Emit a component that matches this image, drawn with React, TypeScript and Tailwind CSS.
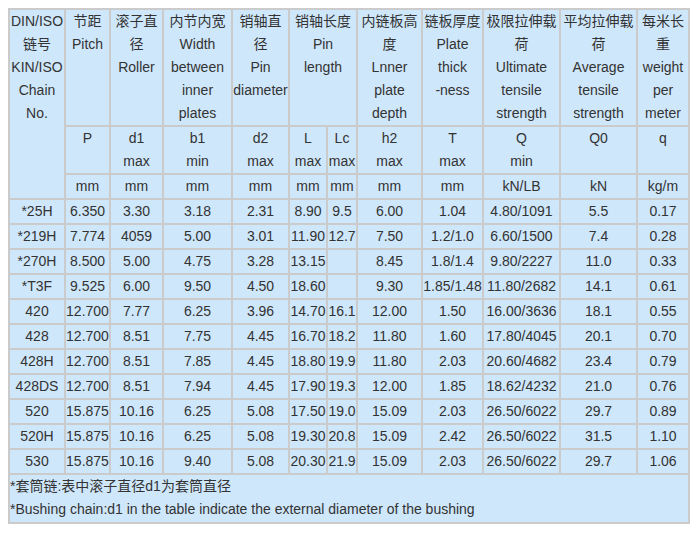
const COLS = [56, 45, 53, 69, 57, 38, 30, 65, 61, 77, 77, 52];

const ROWS = [
  ["*25H", "6.350", "3.30", "3.18", "2.31", "8.90", "9.5", "6.00", "1.04", "4.80/1091", "5.5", "0.17"],
  ["*219H", "7.774", "4059", "5.00", "3.01", "11.90", "12.7", "7.50", "1.2/1.0", "6.60/1500", "7.4", "0.28"],
  ["*270H", "8.500", "5.00", "4.75", "3.28", "13.15", "", "8.45", "1.8/1.4", "9.80/2227", "11.0", "0.33"],
  ["*T3F", "9.525", "6.00", "9.50", "4.50", "18.60", "", "9.30", "1.85/1.48", "11.80/2682", "14.1", "0.61"],
  ["420", "12.700", "7.77", "6.25", "3.96", "14.70", "16.1", "12.00", "1.50", "16.00/3636", "18.1", "0.55"],
  ["428", "12.700", "8.51", "7.75", "4.45", "16.70", "18.2", "11.80", "1.60", "17.80/4045", "20.1", "0.70"],
  ["428H", "12.700", "8.51", "7.85", "4.45", "18.80", "19.9", "11.80", "2.03", "20.60/4682", "23.4", "0.79"],
  ["428DS", "12.700", "8.51", "7.94", "4.45", "17.90", "19.3", "12.00", "1.85", "18.62/4232", "21.0", "0.76"],
  ["520", "15.875", "10.16", "6.25", "5.08", "17.50", "19.0", "15.09", "2.03", "26.50/6022", "29.7", "0.89"],
  ["520H", "15.875", "10.16", "6.25", "5.08", "19.30", "20.8", "15.09", "2.42", "26.50/6022", "31.5", "1.10"],
  ["530", "15.875", "10.16", "9.40", "5.08", "20.30", "21.9", "15.09", "2.03", "26.50/6022", "29.7", "1.06"],
];

const cell = "border-2 border-[#cbcbcb] bg-[#cfe7fb] p-0 text-center align-top whitespace-nowrap";

function Lines({ items }: { items: string[] }) {
  return (
    <>
      {items.map((t, i) => (
        <div key={i}>{t}</div>
      ))}
    </>
  );
}

export default function App() {
  return (
    <div className="min-h-[534px] bg-white pt-2 pl-2">
      <table
        className="table-fixed border-collapse text-[14px] leading-[23px] text-[#333]"
        style={{ width: 682, fontFamily: '"Liberation Sans", Arial, "Noto Sans CJK SC", sans-serif' }}
      >
        <colgroup>
          {COLS.map((w, i) => (
            <col key={i} style={{ width: w }} />
          ))}
        </colgroup>
        <thead>
          <tr>
            <td rowSpan={3} className={cell}>
              <Lines items={["DIN/ISO", "链号", "KIN/ISO", "Chain", "No."]} />
            </td>
            <td className={cell}><Lines items={["节距", "Pitch"]} /></td>
            <td className={cell}><Lines items={["滚子直", "径", "Roller"]} /></td>
            <td className={cell}><Lines items={["内节内宽", "Width", "between", "inner", "plates"]} /></td>
            <td className={cell}><Lines items={["销轴直", "径", "Pin", "diameter"]} /></td>
            <td colSpan={2} className={cell}><Lines items={["销轴长度", "Pin", "length"]} /></td>
            <td className={cell}><Lines items={["内链板高", "度", "Lnner", "plate", "depth"]} /></td>
            <td className={cell}><Lines items={["链板厚度", "Plate", "thick", "-ness"]} /></td>
            <td className={cell}><Lines items={["极限拉伸载", "荷", "Ultimate", "tensile", "strength"]} /></td>
            <td className={cell}><Lines items={["平均拉伸载", "荷", "Average", "tensile", "strength"]} /></td>
            <td className={cell}><Lines items={["每米长", "重", "weight", "per", "meter"]} /></td>
          </tr>
          <tr>
            <td className={cell}>P</td>
            <td className={cell}><Lines items={["d1", "max"]} /></td>
            <td className={cell}><Lines items={["b1", "min"]} /></td>
            <td className={cell}><Lines items={["d2", "max"]} /></td>
            <td className={cell}><Lines items={["L", "max"]} /></td>
            <td className={cell}><Lines items={["Lc", "max"]} /></td>
            <td className={cell}><Lines items={["h2", "max"]} /></td>
            <td className={cell}><Lines items={["T", "max"]} /></td>
            <td className={cell}><Lines items={["Q", "min"]} /></td>
            <td className={cell}>Q0</td>
            <td className={cell}>q</td>
          </tr>
          <tr>
            {["mm", "mm", "mm", "mm", "mm", "mm", "mm", "mm", "kN/LB", "kN", "kg/m"].map((u, i) => (
              <td key={i} className={cell}>{u}</td>
            ))}
          </tr>
        </thead>
        <tbody>
          {ROWS.map((row) => (
            <tr key={row[0]}>
              {row.map((v, i) => (
                <td key={i} className={cell}>{v}</td>
              ))}
            </tr>
          ))}
          <tr>
            <td colSpan={12} className="border-2 border-[#cbcbcb] bg-[#cfe7fb] p-0 pb-px text-left">
              <div>*套筒链:表中滚子直径d1为套筒直径</div>
              <div>*Bushing chain:d1 in the table indicate the external diameter of the bushing</div>
            </td>
          </tr>
        </tbody>
      </table>
    </div>
  );
}
